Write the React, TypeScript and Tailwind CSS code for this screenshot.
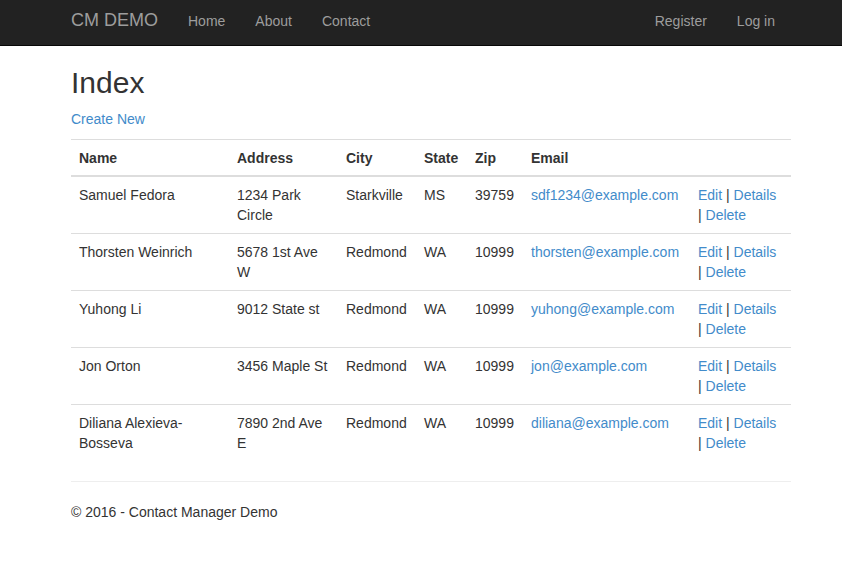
import React from 'react';

type Contact = {
  name: string;
  address: string;
  city: string;
  state: string;
  zip: string;
  email: string;
};

const contacts: Contact[] = [
  { name: 'Samuel Fedora', address: '1234 Park Circle', city: 'Starkville', state: 'MS', zip: '39759', email: 'sdf1234@example.com' },
  { name: 'Thorsten Weinrich', address: '5678 1st Ave W', city: 'Redmond', state: 'WA', zip: '10999', email: 'thorsten@example.com' },
  { name: 'Yuhong Li', address: '9012 State st', city: 'Redmond', state: 'WA', zip: '10999', email: 'yuhong@example.com' },
  { name: 'Jon Orton', address: '3456 Maple St', city: 'Redmond', state: 'WA', zip: '10999', email: 'jon@example.com' },
  { name: 'Diliana Alexieva-Bosseva', address: '7890 2nd Ave E', city: 'Redmond', state: 'WA', zip: '10999', email: 'diliana@example.com' },
];

const App: React.FC = () => {
  return (
    <div className="min-h-[588px] bg-white text-[14px] leading-[20px] text-[#333]" style={{ fontFamily: '"Liberation Sans", Arial, sans-serif' }}>
      <nav className="h-[46px] bg-[#222] border-b border-[#080808]">
        <div className="w-[720px] ml-[71px] flex justify-between">
          <div className="flex">
            <a href="#" className="pt-[10px] pr-[15px] text-[18px] leading-[20px] text-[#9d9d9d]">CM DEMO</a>
            <ul className="flex">
              <li><a href="#" className="block px-[15px] pt-[11px] text-[#9d9d9d]">Home</a></li>
              <li><a href="#" className="block px-[15px] pt-[11px] text-[#9d9d9d]">About</a></li>
              <li><a href="#" className="block px-[15px] pt-[11px] text-[#9d9d9d]">Contact</a></li>
            </ul>
          </div>
          <ul className="flex pr-px">
            <li><a href="#" className="block px-[15px] pt-[11px] text-[#9d9d9d]">Register</a></li>
            <li><a href="#" className="block px-[15px] pt-[11px] text-[#9d9d9d]">Log in</a></li>
          </ul>
        </div>
      </nav>

      <div className="w-[720px] ml-[71px]">
        <h2 className="mt-[20px] mb-[10px] text-[30px] leading-[33px] font-normal">Index</h2>
        <p className="mb-[10px]">
          <a href="#" className="text-[#428bca]">Create New</a>
        </p>
        <table className="w-full table-fixed border-collapse mb-[20px]">
          <colgroup>
            <col className="w-[158px]" />
            <col className="w-[109px]" />
            <col className="w-[78px]" />
            <col className="w-[51px]" />
            <col className="w-[56px]" />
            <col className="w-[167px]" />
            <col className="w-[101px]" />
          </colgroup>
          <thead>
            <tr className="text-left">
              {['Name', 'Address', 'City', 'State', 'Zip', 'Email', ''].map((h, i) => (
                <th key={i} className="px-[8px] pt-[8px] pb-[7px] font-bold align-bottom border-t border-[#ddd] border-b-2">{h}</th>
              ))}
            </tr>
          </thead>
          <tbody>
            {contacts.map((c, i) => (
              <tr key={i} className="align-top">
                <td className={`p-[8px] ${i > 0 ? 'border-t border-[#ddd]' : ''}`}>{c.name}</td>
                <td className={`p-[8px] ${i > 0 ? 'border-t border-[#ddd]' : ''}`}>{c.address}</td>
                <td className={`p-[8px] ${i > 0 ? 'border-t border-[#ddd]' : ''}`}>{c.city}</td>
                <td className={`p-[8px] ${i > 0 ? 'border-t border-[#ddd]' : ''}`}>{c.state}</td>
                <td className={`p-[8px] ${i > 0 ? 'border-t border-[#ddd]' : ''}`}>{c.zip}</td>
                <td className={`p-[8px] ${i > 0 ? 'border-t border-[#ddd]' : ''}`}>
                  <a href="#" className="text-[#428bca]">{c.email}</a>
                </td>
                <td className={`p-[8px] ${i > 0 ? 'border-t border-[#ddd]' : ''}`}>
                  <a href="#" className="text-[#428bca]">Edit</a> | <a href="#" className="text-[#428bca]">Details</a> | <a href="#" className="text-[#428bca]">Delete</a>
                </td>
              </tr>
            ))}
          </tbody>
        </table>
        <hr className="border-t border-[#eee] my-[20px]" />
        <footer>
          <p>© 2016 - Contact Manager Demo</p>
        </footer>
      </div>
    </div>
  );
};

export default App;
